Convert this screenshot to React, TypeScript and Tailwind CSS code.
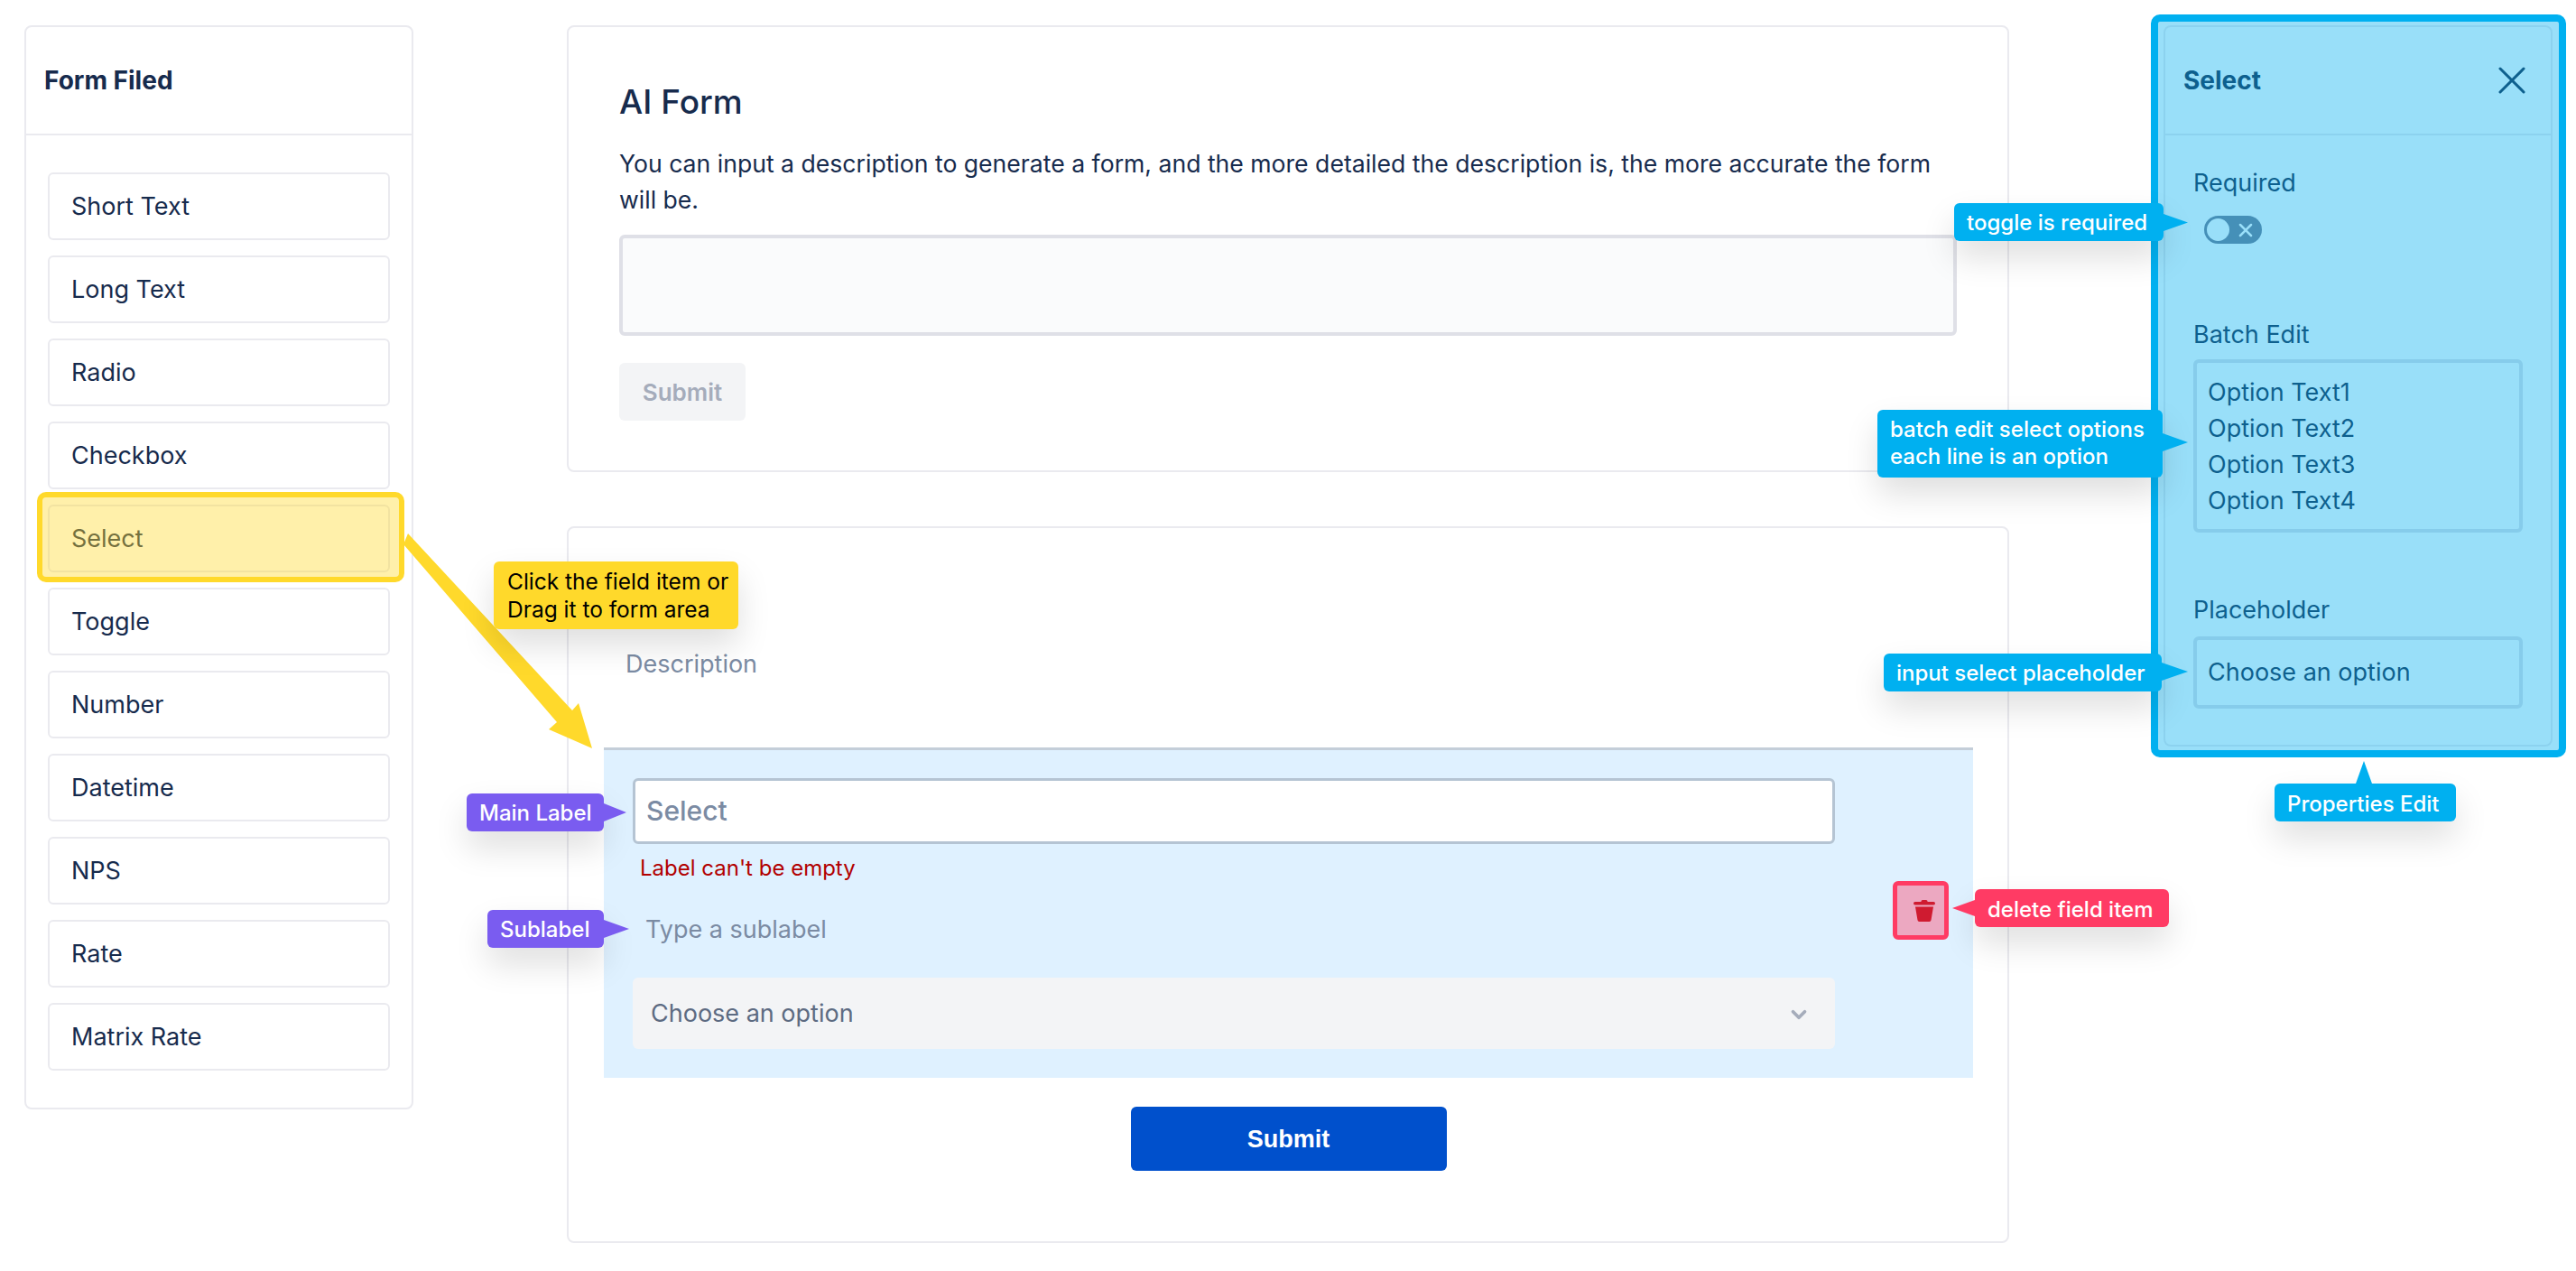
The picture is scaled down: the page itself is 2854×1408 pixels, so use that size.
import { ChevronDown, X } from 'lucide-react';
import type { ReactNode } from 'react';

const fields = ['Short Text', 'Long Text', 'Radio', 'Checkbox', 'Select', 'Toggle', 'Number', 'Datetime', 'NPS', 'Rate', 'Matrix Rate'];

function Callout({ className, arrow, children }: { className: string; arrow: string; children: ReactNode }) {
  return (
    <div className={`absolute z-30 rounded-[6px] text-[24px] font-medium leading-[30px] whitespace-nowrap shadow-[0_18px_36px_rgba(0,0,0,0.13)] ${className}`}>
      {children}
      <span className={`absolute ${arrow}`} />
    </div>
  );
}

function FieldItem({ label }: { label: string }) {
  return (
    <div className="relative h-[75px] rounded-[6px] border-2 border-[#eaeaef] bg-white pl-[24px] pt-[2px] flex items-center text-[27px] text-[#172b4d]">
      {label}
      {label === 'Select' && (
        <div className="absolute -left-[14px] -right-[18px] -top-[16px] -bottom-[13px] rounded-[10px] border-[6px] border-[#ffd92b] bg-[#ffd92b]/40" />
      )}
    </div>
  );
}

export default function App() {
  return (
    <div className="relative w-[2854px] h-[1408px] overflow-hidden bg-white font-['Inter',sans-serif] text-[#172b4d]">
      <div className="flex items-start pt-[28px] pl-[27px]">
        {/* left field list */}
        <div className="w-[431px] h-[1201px] shrink-0 rounded-[8px] border-2 border-[#eaeaef] bg-white">
          <div className="h-[120px] border-b-2 border-[#eaeaef] pl-[20px] flex items-center text-[28px] font-bold">Form Filed</div>
          <div className="flex flex-col gap-[17px] pt-[41px] pl-[24px] pr-[24px]">
            {fields.map((f) => (
              <FieldItem key={f} label={f} />
            ))}
          </div>
        </div>

        {/* center column */}
        <div className="w-[1598px] ml-[170px] shrink-0 flex flex-col gap-[60px]">
          <div className="h-[495px] rounded-[8px] border-2 border-[#eaeaef] bg-white pl-[56px] pr-[56px] pt-[59px]">
            <div className="text-[37px] leading-[48px] font-medium">AI Form</div>
            <p className="mt-[24px] text-[26.6px] leading-[40px]">You can input a description to generate a form, and the more detailed the description is, the more accurate the form will be.</p>
            <div className="mt-[19px] h-[112px] rounded-[6px] border-4 border-[#dfe0e7] bg-[#fafbfc]" />
            <button className="mt-[30px] block w-[140px] h-[64px] rounded-[6px] bg-[#f3f4f6] text-[26px] font-semibold text-[#a5acbb]">Submit</button>
          </div>

          <div className="h-[794px] rounded-[8px] border-2 border-[#eaeaef] bg-white pl-[39px] pr-[38px]">
            <div className="pt-[131px] pl-[24px] text-[27px] leading-[40px] text-[#7b8ba3]">Description</div>
            <div className="mt-[72px] h-[366px] border-t-[3px] border-[#c4ced9] bg-[#dff1ff] flex items-center pl-[32px]">
              <div className="w-[1332px] shrink-0 self-start pt-[31px]">
                <div className="h-[73px] rounded-[6px] border-[3px] border-[#b5c4d3] bg-white pl-[12px] flex items-center text-[30px] font-medium text-[#7b8ba3]">Select</div>
                <div className="pl-[8px] mt-[13px] text-[24px] leading-[28px] text-[#b20000]">Label can't be empty</div>
                <div className="pl-[14px] mt-[34px] text-[27px] leading-[40px] text-[#7b8ba3]">Type a sublabel</div>
                <div className="mt-[33px] h-[79px] rounded-[6px] bg-[#f3f4f6] pl-[20px] pr-[27px] pt-[2px] flex items-center justify-between text-[27px] text-[#5d6b82]">
                  Choose an option
                  <ChevronDown size={26} strokeWidth={3.4} className="text-[#a5acbb]" />
                </div>
              </div>
              <button className="ml-[64px] w-[62px] h-[65px] mb-[8px] rounded-[6px] border-[5px] border-[#ff3b64] bg-[#eca8c1] flex items-center justify-center pl-[7px]">
                <svg width="24" height="24" viewBox="0 0 24 24" fill="#cf1b30">
                  <rect x="8.5" y="0" width="7" height="3" rx="1.5" />
                  <rect x="0" y="2" width="24" height="3.5" rx="1.75" />
                  <path d="M2 7.5h20l-2.5 14.8a2 2 0 0 1-2 1.7H6.5a2 2 0 0 1-2-1.7z" />
                </svg>
              </button>
            </div>
            <button className="mx-auto mt-[32px] block w-[350px] h-[71px] pt-[2px] rounded-[6px] bg-[#0050cc] font-['Liberation_Sans',sans-serif] text-[27px] font-bold text-white">Submit</button>
          </div>
        </div>

        {/* properties panel */}
        <div className="relative w-[431px] h-[799px] ml-[171px] shrink-0 rounded-[8px] border-2 border-[#eaeaef] bg-white">
          <div className="h-[120px] border-b-2 border-[#eaeaef] pl-[20px] pr-[17px] flex items-center justify-between text-[28px] font-bold">
            Select
            <X size={52} strokeWidth={1.4} />
          </div>
          <div className="pl-[31px] pr-[31px]">
            <div className="mt-[33px] text-[27px] leading-[40px]">Required</div>
            <div className="mt-[16px] ml-[12px] w-[64px] h-[31px] rounded-full bg-[#737b93] flex items-center pl-[3px]">
              <span className="w-[25px] h-[25px] rounded-full bg-white" />
              <X size={24} strokeWidth={2.5} className="ml-[6px] text-white" />
            </div>
            <div className="mt-[81px] text-[27px] leading-[40px]">Batch Edit</div>
            <div className="mt-[7px] h-[192px] rounded-[6px] border-4 border-[#dfe0e7] pl-[12px] pt-[13px] text-[27px] leading-[40px]">
              <div>Option Text1</div>
              <div>Option Text2</div>
              <div>Option Text3</div>
              <div>Option Text4</div>
            </div>
            <div className="mt-[66px] text-[27px] leading-[40px]">Placeholder</div>
            <div className="mt-[9px] h-[80px] rounded-[6px] border-4 border-[#dfe0e7] pl-[12px] flex items-center text-[27px]">Choose an option</div>
          </div>
          <div className="absolute -left-[16px] -right-[17px] -top-[14px] -bottom-[14px] rounded-[10px] border-[8px] border-[#00b0f0] bg-[#00b0f0]/40" />
        </div>
      </div>

      {/* yellow arrow from the field list to the form */}
      <svg className="absolute z-20 left-0 top-0 pointer-events-none" width="2854" height="1408">
        <polygon points="452,591 634,787 641,779 656,829 608,808 617,800 447,603" fill="#ffd92b" />
      </svg>

      <Callout className="left-[547px] top-[622px] w-[271px] h-[75px] bg-[#ffd92b] text-black pl-[15px] pt-[7px]" arrow="hidden">
        <span className="font-normal text-[24.5px]">
          Click the field item or
          <br />
          Drag it to form area
        </span>
      </Callout>
      <Callout className="left-[517px] top-[879px] w-[152px] h-[42px] bg-[#7a5cf0] text-white pl-[14px] pt-[7px]" arrow="left-full top-[11px] w-[25px] h-[20px] bg-[#7a5cf0] [clip-path:polygon(0_0,100%_50%,0_100%)]">
        Main Label
      </Callout>
      <Callout className="left-[540px] top-[1008px] w-[129px] h-[42px] bg-[#7a5cf0] text-white pl-[14px] pt-[7px]" arrow="left-full top-[11px] w-[28px] h-[20px] bg-[#7a5cf0] [clip-path:polygon(0_0,100%_50%,0_100%)]">
        Sublabel
      </Callout>
      <Callout className="left-[2188px] top-[985px] w-[215px] h-[42px] bg-[#ff3b64] text-white pl-[14px] pt-[8px]" arrow="right-full top-[12px] w-[25px] h-[18px] bg-[#ff3b64] [clip-path:polygon(100%_0,0_50%,100%_100%)]">
        delete field item
      </Callout>
      <Callout className="left-[2165px] top-[225px] w-[232px] h-[42px] bg-[#00b0f0] text-white pl-[14px] pt-[7px]" arrow="left-full top-[12px] w-[27px] h-[19px] bg-[#00b0f0] [clip-path:polygon(0_0,100%_50%,0_100%)]">
        toggle is required
      </Callout>
      <Callout className="left-[2080px] top-[454px] w-[316px] h-[75px] bg-[#00b0f0] text-white pl-[14px] pt-[7px]" arrow="left-full top-[26px] w-[28px] h-[20px] bg-[#00b0f0] [clip-path:polygon(0_0,100%_50%,0_100%)]">
        batch edit select options
        <br />
        each line is an option
      </Callout>
      <Callout className="left-[2087px] top-[724px] w-[308px] h-[42px] bg-[#00b0f0] text-white pl-[14px] pt-[7px]" arrow="left-full top-[10px] w-[29px] h-[20px] bg-[#00b0f0] [clip-path:polygon(0_0,100%_50%,0_100%)]">
        input select placeholder
      </Callout>
      <Callout className="left-[2520px] top-[868px] w-[201px] h-[42px] bg-[#00b0f0] text-white pl-[14px] pt-[8px]" arrow="bottom-full left-[90px] w-[18px] h-[25px] bg-[#00b0f0] [clip-path:polygon(50%_0,100%_100%,0_100%)]">
        Properties Edit
      </Callout>
    </div>
  );
}
